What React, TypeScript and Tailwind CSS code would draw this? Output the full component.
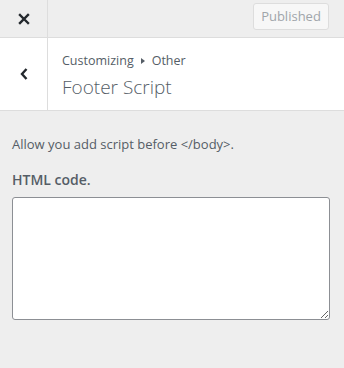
import React from "react";

export default function App() {
  return (
    <div
      className="h-[368px] w-[344px] overflow-hidden bg-[#eeeeee] text-[#555d66]"
      style={{ fontFamily: '"Open Sans", "Noto Sans", sans-serif' }}
    >
      {/* top bar */}
      <div className="flex h-[38px] items-stretch border-b border-[#dddddd]">
        <button className="flex w-[48px] items-center justify-center border-r border-[#dddddd] text-[#23282d]">
          <svg width="12" height="12" viewBox="0 0 12 12">
            <path d="M2 2 L10 10 M10 2 L2 10" stroke="currentColor" strokeWidth="2.4" strokeLinecap="square" />
          </svg>
        </button>
        <div className="flex flex-1 items-start justify-end pr-[15px] pt-[3px]">
          <div className="flex h-[27px] w-[76px] items-center justify-center rounded-[3px] border border-[#dddddd] bg-[#f7f7f7] text-[13px] text-[#a0a5aa]">
            Published
          </div>
        </div>
      </div>

      {/* section header */}
      <div className="flex h-[73px] items-stretch border-b border-[#dddddd] bg-white">
        <button className="flex w-[48px] items-center justify-center border-r border-[#dddddd] text-[#23282d]">
          <svg width="10" height="14" viewBox="0 0 10 14">
            <path d="M7.5 2 L3 7 L7.5 12" fill="none" stroke="currentColor" strokeWidth="2.4" />
          </svg>
        </button>
        <div className="flex flex-col justify-center pl-[14px] pt-[3px]">
          <div className="flex items-center text-[12.5px] leading-[18px] text-[#555d66]">
            Customizing
            <svg className="mx-[7px]" width="4" height="6" viewBox="0 0 4 6">
              <path d="M0 0 L4 3 L0 6 Z" fill="currentColor" />
            </svg>
            Other
          </div>
          <div className="mt-[5px] text-[19px] leading-[24px] font-light text-[#555d66]">Footer Script</div>
        </div>
      </div>

      {/* content */}
      <div className="px-[12px] pt-[24px]">
        <p className="text-[13px] leading-[18px] text-[#555d66]">Allow you add script before &lt;/body&gt;.</p>
        <p className="mt-[18px] text-[14px] leading-[18px] font-semibold text-[#555d66]">HTML code.</p>
        <textarea className="mt-[8px] block h-[123px] w-[318px] resize-y rounded-[3px] border border-[#8c8f94] bg-white" />
      </div>
    </div>
  );
}
